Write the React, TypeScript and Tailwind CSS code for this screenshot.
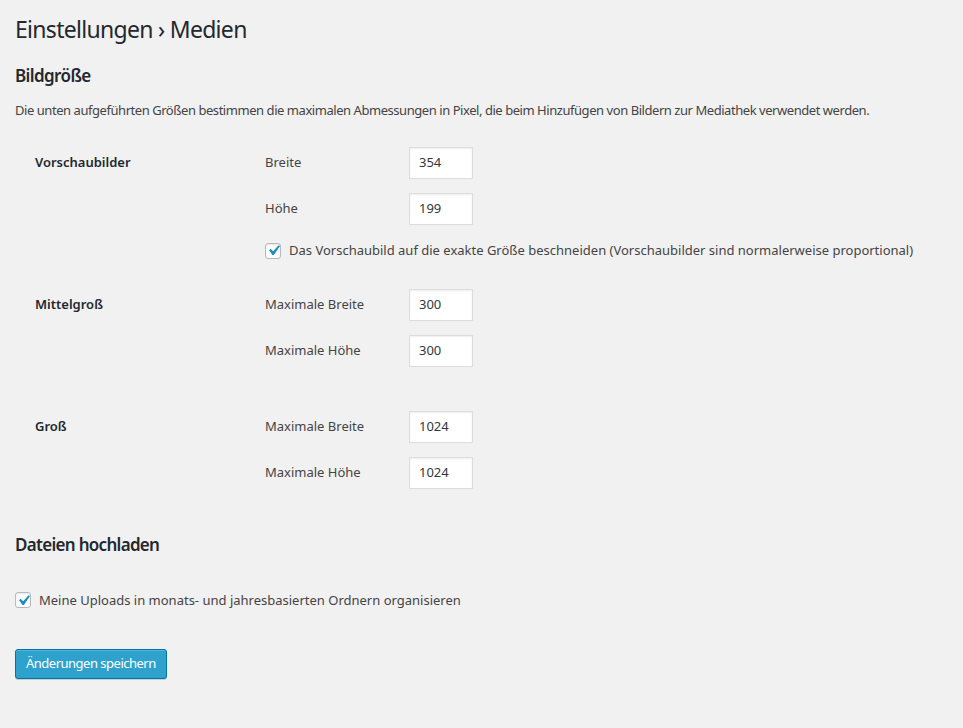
import React from "react";

const font = { fontFamily: '"Noto Sans", "Open Sans", Arial, sans-serif' };

function NumInput({ value }: { value: string }) {
  return (
    <div className="w-[64px] h-[32px] bg-white border border-[#dddddd] shadow-[inset_0_1px_2px_rgba(0,0,0,0.07)] flex items-center pl-[9px] text-[13px] text-[#32373c]">
      {value}
    </div>
  );
}

function Check() {
  return (
    <div className="w-[16px] h-[16px] shrink-0 bg-white border border-[#b4b9be] rounded-[3px] shadow-[inset_0_1px_2px_rgba(0,0,0,0.1)] flex items-center justify-center overflow-visible">
      <svg width="21" height="21" viewBox="0 0 20 20" className="shrink-0 -m-[3px]">
        <path d="M14.83 4.89l1.34.94-5.81 8.38H9.02L5.78 9.67l1.34-1.25 2.57 2.4z" fill="#1e8cbe" />
      </svg>
    </div>
  );
}

function Field({ label, value, first }: { label: string; value: string; first?: boolean }) {
  return (
    <div className={`flex items-center ${first ? "" : "mt-[14px]"}`}>
      <div className="w-[144px] text-[13px] text-[#444]">{label}</div>
      <NumInput value={value} />
    </div>
  );
}

function Row({ title, children, className = "" }: { title: string; children: React.ReactNode; className?: string }) {
  return (
    <div className={`flex ${className}`}>
      <div className="w-[250px] pl-[20px] pt-[6px] text-[13px] font-semibold text-[#23282d]">{title}</div>
      <div>{children}</div>
    </div>
  );
}

export default function App() {
  return (
    <div className="min-h-[728px] w-full bg-[#f1f1f1] text-[#444]" style={font}>
      <div className="pl-[15px] pt-[15px]">
        <h1 className="text-[23px] leading-[29px] text-[#23282d] font-normal tracking-[-0.7px]">Einstellungen › Medien</h1>
        <h2 className="mt-[21px] text-[17px] leading-[22px] font-semibold text-[#23282d] tracking-[-0.6px]">Bildgröße</h2>
        <p className="mt-[14px] text-[13px] leading-[18px] text-[#444] tracking-[-0.45px]">
          Die unten aufgeführten Größen bestimmen die maximalen Abmessungen in Pixel, die beim Hinzufügen von Bildern zur Mediathek verwendet werden.
        </p>

        <Row title="Vorschaubilder" className="mt-[28px]">
          <Field label="Breite" value="354" first />
          <Field label="Höhe" value="199" />
          <div className="mt-[16px] flex items-center gap-[8px] text-[13px] text-[#444]">
            <Check />
            <span>Das Vorschaubild auf die exakte Größe beschneiden (Vorschaubilder sind normalerweise proportional)</span>
          </div>
        </Row>

        <Row title="Mittelgroß" className="mt-[28px]">
          <Field label="Maximale Breite" value="300" first />
          <Field label="Maximale Höhe" value="300" />
        </Row>

        <Row title="Groß" className="mt-[44px]">
          <Field label="Maximale Breite" value="1024" first />
          <Field label="Maximale Höhe" value="1024" />
        </Row>

        <h2 className="mt-[45px] text-[17px] leading-[22px] font-semibold text-[#23282d] tracking-[-0.7px]">Dateien hochladen</h2>

        <div className="mt-[35px] flex items-center gap-[8px] text-[13px] text-[#444]">
          <Check />
          <span>Meine Uploads in monats- und jahresbasierten Ordnern organisieren</span>
        </div>

        <button className="mt-[39px] h-[30px] px-[10px] bg-[#2ea2cc] border border-[#0074a2] rounded-[3px] text-white text-[13px] tracking-[-0.5px] shadow-[inset_0_1px_0_rgba(120,200,230,0.5),0_1px_0_rgba(0,0,0,0.15)]">
          Änderungen speichern
        </button>
      </div>
    </div>
  );
}
